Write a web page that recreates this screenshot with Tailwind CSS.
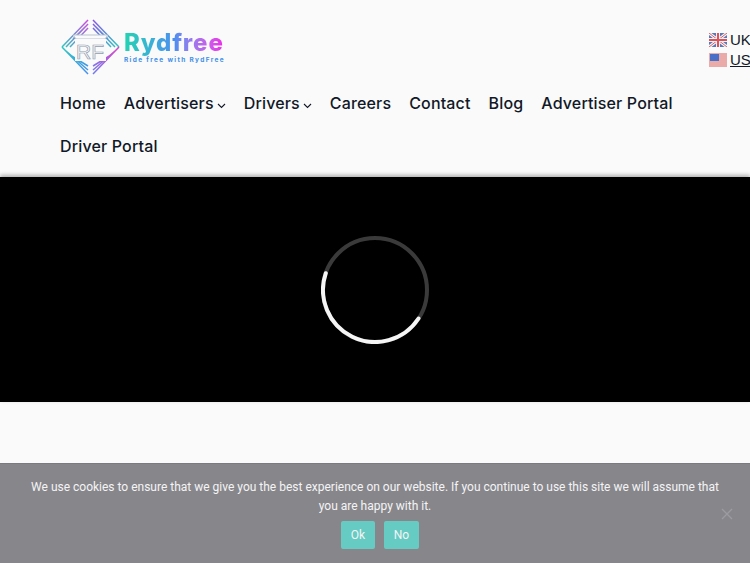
<!DOCTYPE html>
<html lang="en">
<head>
  <meta charset="UTF-8" />
  <meta name="viewport" content="width=device-width, initial-scale=1" />
  <title>Rydfree</title>
  <script src="https://cdn.jsdelivr.net/npm/@tailwindcss/browser@4"></script>
</head>
<body class="relative h-[563px] overflow-hidden bg-[#fafafa] font-['Inter',sans-serif] text-[#111827]">
  <!-- Header -->
  <header class="h-[177px] overflow-hidden pl-[60px]">
    <div class="flex h-[82px] items-start justify-between">
      <!-- Logo -->
      <div class="mt-[18px] flex items-center">
        <svg width="62" height="58" viewBox="0 0 62 58" class="ml-[1px]" fill="none">
          <defs>
            <linearGradient id="tl" x1="0" y1="1" x2="1" y2="0"><stop offset="0" stop-color="#2cc8c0" /><stop offset="1" stop-color="#d04ae0" /></linearGradient>
            <linearGradient id="tr" x1="0" y1="0" x2="1" y2="1"><stop offset="0" stop-color="#8a55e8" /><stop offset="1" stop-color="#2cc8c0" /></linearGradient>
            <linearGradient id="bl" x1="0" y1="0" x2="1" y2="1"><stop offset="0" stop-color="#2cc8c0" /><stop offset="1" stop-color="#4a8ff0" /></linearGradient>
            <linearGradient id="br" x1="1" y1="0" x2="0" y2="1"><stop offset="0" stop-color="#e040c8" /><stop offset="1" stop-color="#6f7ff0" /></linearGradient>
          </defs>
          <g stroke-width="1.5">
            <path d="M27 2 L1 29 M27 6 L5 29 M27 10 L9 29 M24 9 L12 21" stroke="url(#tl)" />
            <path d="M32 2 L58 29 M32 6 L54 29 M32 10 L50 29 M35 9 L47 21" stroke="url(#tr)" />
            <path d="M1 29 L27 56 M5 33 L27 52 M9 37 L27 48" stroke="url(#bl)" />
            <path d="M58 29 L32 56 M54 33 L32 52 M50 37 L32 48" stroke="url(#br)" />
          </g>
          <path d="M12 17 H47 L44 21 H15 Z" fill="#fafafa" stroke="#b9c2cf" />
          <rect x="14" y="21" width="31" height="22" fill="#fafafa" />
          <text x="15" y="41" font-family="'Liberation Sans',sans-serif" font-size="21" fill="#fafafa" stroke="#8f9cb0" stroke-width="0.7">RF</text>
        </svg>
        <div class="ml-[1px] -mt-[2px] flex flex-col">
          <span class="bg-linear-to-r from-[#22d3b0] via-[#4a8ff0] to-[#f018e8] bg-clip-text text-[24px] font-extrabold leading-[28px] tracking-[0.85px] text-transparent">Rydfree</span>
          <span class="text-[6.5px] font-bold leading-[6px] tracking-[1.35px] text-[#3f8fe8]">Ride free with RydFree</span>
        </div>
      </div>
      <!-- Language links -->
      <div class="mt-[30px] flex w-[41px] shrink-0 flex-col overflow-hidden text-[15px] leading-[20px] font-['Liberation_Sans',sans-serif]">
        <a class="flex items-center gap-[3px] whitespace-nowrap">
          <svg width="18" height="14" viewBox="0 0 18 14" class="shrink-0">
            <rect width="18" height="14" fill="#5a78b8" />
            <path d="M0 0 L18 14 M18 0 L0 14" stroke="#f2f2f2" stroke-width="3" />
            <path d="M0 0 L18 14 M18 0 L0 14" stroke="#e0606a" stroke-width="1" />
            <path d="M9 0 V14 M0 7 H18" stroke="#f2f2f2" stroke-width="4" />
            <path d="M9 0 V14 M0 7 H18" stroke="#e0505c" stroke-width="2" />
          </svg>
          UK
        </a>
        <a class="flex items-center gap-[3px] whitespace-nowrap underline">
          <svg width="18" height="14" viewBox="0 0 18 14" class="shrink-0">
            <rect width="18" height="14" fill="#f5f5f5" />
            <path d="M0 1 H18 M0 3 H18 M0 5 H18 M0 7 H18 M0 9 H18 M0 11 H18 M0 13 H18" stroke="#e0605a" stroke-width="1" />
            <rect x="1" y="1" width="9" height="7" fill="#4a6fc8" />
          </svg>
          US
        </a>
      </div>
    </div>
    <!-- Nav -->
    <nav class="flex flex-wrap gap-x-[18px] pr-[60px] text-[16px] font-[450] leading-[43px] tracking-[0.15px]">
      <a>Home</a>
      <a class="flex items-center gap-[3px]">Advertisers
        <svg width="9" height="6" viewBox="0 0 9 6" class="mt-[4px]" fill="none" stroke="#111827" stroke-width="1.1"><path d="M1 1 L4.5 4.5 L8 1" /></svg>
      </a>
      <a class="flex items-center gap-[3px]">Drivers
        <svg width="9" height="6" viewBox="0 0 9 6" class="mt-[4px]" fill="none" stroke="#111827" stroke-width="1.1"><path d="M1 1 L4.5 4.5 L8 1" /></svg>
      </a>
      <a>Careers</a>
      <a>Contact</a>
      <a>Blog</a>
      <a>Advertiser Portal</a>
      <a>Driver Portal</a>
    </nav>
  </header>

  <!-- Video loader -->
  <section class="flex h-[225px] items-center justify-center bg-black shadow-[0_-2px_4px_rgba(0,0,0,0.3)]">
    <svg width="108" height="108" viewBox="0 0 108 108" fill="none" stroke-width="4">
      <circle cx="54" cy="54" r="52" stroke="#3a3a3a" />
      <path d="M4.8 37.2 A52 52 0 0 0 97.5 82.5" stroke="#f5f5f5" stroke-linecap="round" />
    </svg>
  </section>

  <!-- Cookie notice -->
  <div class="fixed inset-x-0 bottom-0 h-[100px] border-t border-[#7a7a80] bg-[#87868b] pt-[14px] text-center font-['Roboto',sans-serif] text-[12px] leading-[19px] text-[#f4f4f5]">
    <p class="mx-auto w-[700px]">We use cookies to ensure that we give you the best experience on our website. If you continue to use this site we will assume that you are happy with it.</p>
    <div class="mt-[5px] flex justify-center gap-[9px] pl-[10px]">
      <button class="h-[28px] w-[34px] rounded-[2px] bg-[#66cbc2] text-[12px] text-[#f4f4f5]">Ok</button>
      <button class="h-[28px] w-[35px] rounded-[2px] bg-[#66cbc2] text-[12px] text-[#f4f4f5]">No</button>
    </div>
    <svg width="12" height="12" viewBox="0 0 12 12" class="absolute right-[17px] top-[44px]" stroke="#9b9ba0" stroke-width="1.4"><path d="M1 1 L11 11 M11 1 L1 11" /></svg>
  </div>
</body>
</html>
